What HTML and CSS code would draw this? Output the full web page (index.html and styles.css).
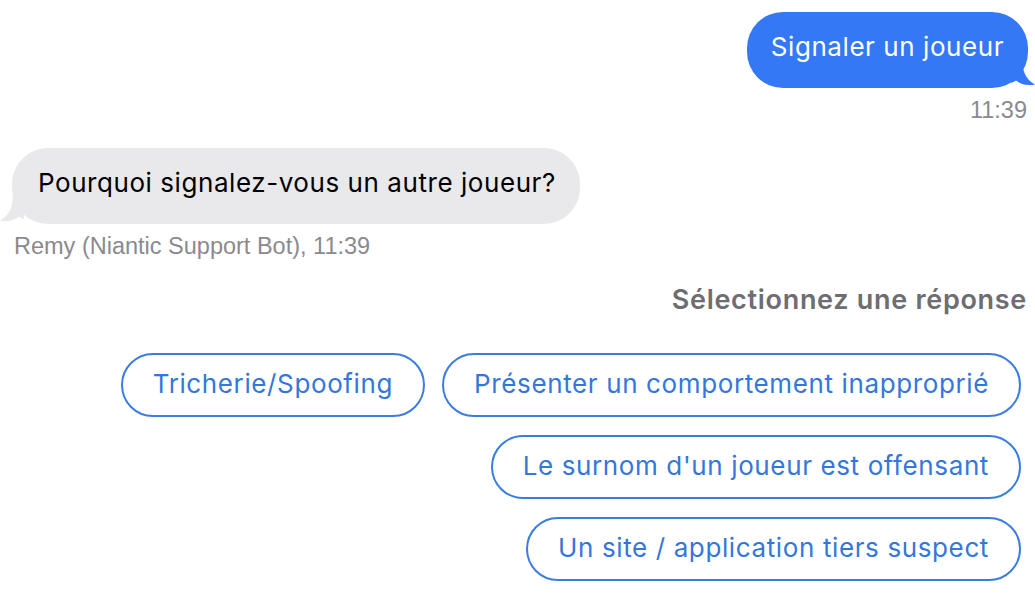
FILE: index.html
```html
<!DOCTYPE html>
<html lang="fr">

<head>
    <meta charset="UTF-8">
    <meta name="viewport" content="width=device-width, initial-scale=1.0">
    <title>Support</title>
    <link rel="stylesheet" href="styles.css">
</head>

<body>
    <div class="chat">
        <div class="row row-out">
            <div class="bubble bubble-out">
                Signaler un joueur
                <svg class="tail tail-out" width="24" height="30" viewBox="0 0 24 30">
                    <path d="M0 0 H11 C11 13 14 22 24 27.5 C15 29 9 27 5 23.5 C3 25 0 26 0 26 Z" fill="#3478f6"/>
                </svg>
            </div>
        </div>
        <p class="meta meta-out">11:39</p>

        <div class="row row-in">
            <div class="bubble bubble-in">
                Pourquoi signalez-vous un autre joueur?
                <svg class="tail tail-in" width="24" height="30" viewBox="0 0 24 30">
                    <path d="M24 0 H13 C13 13 10 22 0 27.5 C9 29 15 27 19 23.5 C21 25 24 26 24 26 Z" fill="#e9e9eb"/>
                </svg>
            </div>
        </div>
        <p class="meta meta-in">Remy (Niantic Support Bot), 11:39</p>

        <h2 class="prompt">Sélectionnez une réponse</h2>

        <div class="replies">
            <button class="reply">Tricherie/Spoofing</button>
            <button class="reply">Présenter un comportement inapproprié</button>
            <button class="reply">Le surnom d'un joueur est offensant</button>
            <button class="reply">Un site / application tiers suspect</button>
        </div>
    </div>
</body>

</html>
```

FILE: styles.css
```css
body {
    margin: 0;
    background: #fff;
    font-family: Inter, "Noto Sans", sans-serif;
}

.chat {
    padding: 12px 7px 0 12px;
}

.row {
    display: flex;
}

.row-out {
    justify-content: flex-end;
}

.bubble {
    position: relative;
    height: 76px;
    box-sizing: border-box;
    display: flex;
    align-items: center;
    padding-bottom: 7px;
    border-radius: 36px;
    font-size: 26px;
    letter-spacing: 0.56px;
}

.bubble-out {
    background: #3478f6;
    color: #fff;
    padding-left: 24px;
    padding-right: 24px;
}

.bubble-in {
    background: #e9e9eb;
    color: #000;
    padding-left: 26px;
    padding-right: 24px;
}

.tail {
    position: absolute;
    bottom: 1px;
}

.tail-out {
    right: -7px;
}

.tail-in {
    left: -12px;
}

.meta {
    margin: 0;
    font-family: "Liberation Sans", Arial, sans-serif;
    font-size: 23.5px;
    color: #8a8a8e;
    line-height: 22px;
}

.meta-out {
    text-align: right;
    margin-top: 11px;
    padding-right: 1px;
}

.meta-in {
    margin-top: 11px;
    padding-left: 2px;
}

.row-in {
    margin-top: 27px;
}

.prompt {
    margin: 28px 1px 0 0;
    text-align: right;
    font-size: 27px;
    font-weight: 600;
    letter-spacing: 0.7px;
    color: #6d6d72;
    line-height: 30px;
}

.replies {
    display: flex;
    flex-wrap: wrap;
    justify-content: flex-end;
    gap: 18px 17px;
    margin: 38px 7px 0 0;
    padding-left: 50px;
}

.reply {
    height: 64px;
    box-sizing: border-box;
    padding: 0 30px 4px;
    border: 2px solid #3a7de0;
    border-radius: 32px;
    background: #fff;
    color: #3477dc;
    font-family: Inter, "Noto Sans", sans-serif;
    font-size: 26px;
    letter-spacing: 0.62px;
}
```
